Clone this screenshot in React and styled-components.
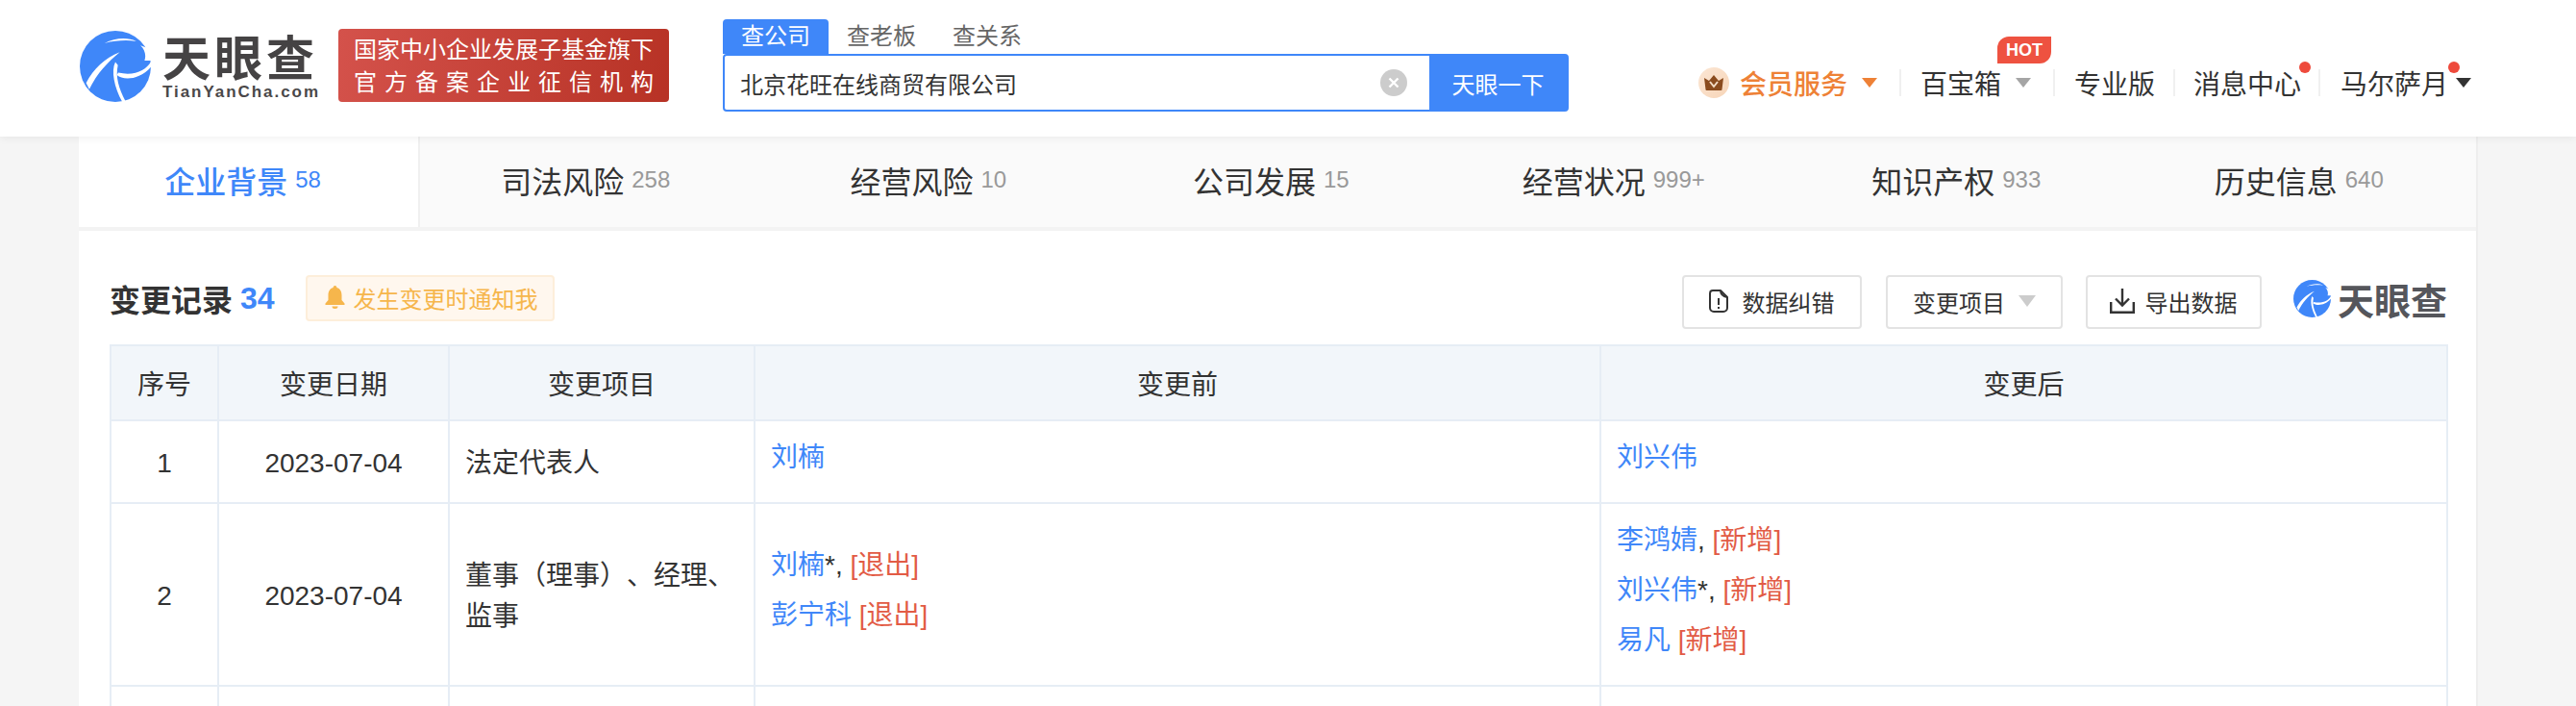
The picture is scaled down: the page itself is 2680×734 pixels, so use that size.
import React from 'react';
import styled, { createGlobalStyle } from 'styled-components';

const BLUE = '#3f87f9';
const LINE = '#e6edf5';

const GlobalStyle = createGlobalStyle`
    html, body {
        margin: 0;
        padding: 0;
        background: #f5f5f5;
    }
    body {
        font-family: "Liberation Sans", "Noto Sans CJK SC", sans-serif;
        color: #333;
        text-spacing-trim: space-all;
    }
    * {
        box-sizing: border-box;
    }
`;

const Page = styled.div`
    width: 2680px;
    height: 734px;
    overflow: hidden;
`;

const Header = styled.header`
    position: relative;
    z-index: 2;
    height: 142px;
    display: flex;
    align-items: flex-start;
    padding-left: 83px;
    padding-right: 109px;
    background: #fff;
    box-shadow: 0 2px 8px rgba(0, 0, 0, 0.06);
`;

const BrandBox = styled.div`
    display: flex;
    align-items: flex-start;
    margin-top: 32px;
    gap: 12px;
`;

const BrandText = styled.div`
    display: flex;
    flex-direction: column;
    width: 160px;
`;

const BrandName = styled.div`
    font-family: "Noto Sans CJK SC", sans-serif;
    font-weight: 700;
    font-size: 50px;
    line-height: 50px;
    letter-spacing: 4px;
    white-space: nowrap;
    color: #454344;
    height: 54px;
`;

const BrandDomain = styled.div`
    font-family: "Liberation Sans", sans-serif;
    font-size: 17px;
    line-height: 20px;
    letter-spacing: 1.95px;
    font-weight: 700;
    color: #4a4849;
    white-space: nowrap;
`;

const Badge = styled.div`
    width: 344px;
    height: 76px;
    margin-top: 30px;
    margin-left: 23px;
    padding: 5px 16px 0;
    border-radius: 4px;
    color: #fff;
    font-size: 24px;
    line-height: 34px;
    background: linear-gradient(100deg, #d4524b, #b73225);
`;

const BadgeLine = styled.div`
    text-align: justify;
    text-align-last: justify;
    white-space: nowrap;
`;

const Search = styled.div`
    width: 880px;
    margin-top: 20px;
    margin-left: 56px;
`;

const SearchTabs = styled.div`
    display: flex;
    height: 36px;
`;

const SearchTab = styled.div`
    width: 110px;
    text-align: center;
    font-size: 24px;
    line-height: 36px;
    border-radius: 4px 4px 0 0;
    color: ${(p) => (p.$active ? '#fff' : '#666')};
    background: ${(p) => (p.$active ? BLUE : 'transparent')};
`;

const SearchBar = styled.div`
    display: flex;
    height: 60px;
    border: 2px solid ${BLUE};
    border-radius: 4px;
`;

const SearchInput = styled.div`
    flex: 1;
    display: flex;
    align-items: center;
    justify-content: space-between;
    padding: 0 23px 0 16px;
    font-size: 24px;
    color: #333;
`;

const SearchButton = styled.div`
    width: 143px;
    display: flex;
    align-items: center;
    justify-content: center;
    font-size: 24px;
    color: #fff;
    background: ${BLUE};
`;

const Nav = styled.nav`
    margin-left: auto;
    height: 142px;
    display: flex;
    align-items: center;
    padding-top: 30px;
`;

const NavItem = styled.div`
    position: relative;
    display: flex;
    align-items: center;
    height: 32px;
    font-size: 28px;
    white-space: nowrap;
    color: ${(p) => p.$color || '#333'};
    font-weight: ${(p) => p.$weight || 400};
`;

const NavLine = styled.span`
    width: 2px;
    height: 28px;
    margin: 0 ${(p) => p.$right}px 0 ${(p) => p.$left}px;
    background: #f0f0f0;
`;

const Caret = styled.span`
    width: 0;
    height: 0;
    margin-left: ${(p) => p.$gap ?? 15}px;
    border-left: ${(p) => p.$size || 8}px solid transparent;
    border-right: ${(p) => p.$size || 8}px solid transparent;
    border-top: ${(p) => (p.$size || 8) * 1.35}px solid ${(p) => p.$color};
`;

const Hot = styled.span`
    position: absolute;
    left: 80px;
    top: -32px;
    width: 56px;
    height: 28px;
    display: flex;
    align-items: center;
    justify-content: center;
    font-size: 18px;
    font-weight: 700;
    color: #fff;
    background: #ee5240;
    border-radius: 12px 0 12px 0;
`;

const Dot = styled.span`
    position: absolute;
    right: ${(p) => p.$right}px;
    top: -6px;
    width: 12px;
    height: 12px;
    border-radius: 50%;
    background: #ee4a3c;
`;

const Content = styled.main`
    width: 2496px;
    margin-left: 82px;
    background: #fff;
    border-right: 2px solid #eee;
`;

const TabRow = styled.div`
    display: flex;
    height: 98px;
    border-bottom: 4px solid #f3f3f3;
`;

const Tab = styled.div`
    flex: ${(p) => (p.$active ? '0 0 355px' : '1')};
    display: flex;
    align-items: center;
    justify-content: center;
    gap: 8px;
    padding-right: 12px;
    padding-bottom: 4px;
    font-size: 32px;
    color: ${(p) => (p.$active ? BLUE : '#333')};
    font-weight: ${(p) => (p.$active ? 500 : 400)};
    background: ${(p) => (p.$active ? '#fff' : '#fafafa')};
    border-right: ${(p) => (p.$active ? '2px solid #f0f0f0' : 'none')};
`;

const TabCount = styled.span`
    font-size: 24px;
    font-weight: 400;
    color: ${(p) => (p.$active ? BLUE : '#999')};
`;

const Section = styled.section`
    padding: 46px 30px 0 32px;
`;

const TitleRow = styled.div`
    height: 72px;
    display: flex;
    align-items: flex-start;
`;

const Title = styled.h2`
    margin: 0;
    height: 48px;
    display: flex;
    align-items: center;
    gap: 8px;
    font-size: 32px;
    font-weight: 700;
    color: #333;
`;

const TitleCount = styled.span`
    color: ${BLUE};
`;

const Notify = styled.div`
    width: 259px;
    height: 48px;
    margin-left: 32px;
    padding: 0 0 2px 18px;
    display: flex;
    align-items: center;
    gap: 9px;
    font-size: 24px;
    color: #f6b64c;
    background: #fff7ee;
    border: 2px solid #fdeeda;
    border-radius: 4px;
`;

const Tools = styled.div`
    margin-left: auto;
    display: flex;
    align-items: flex-start;
`;

const ToolButton = styled.div`
    height: 56px;
    width: ${(p) => p.$width}px;
    margin-left: ${(p) => p.$gap}px;
    padding-bottom: 2px;
    display: flex;
    align-items: center;
    justify-content: center;
    gap: ${(p) => p.$inner}px;
    font-size: 24px;
    color: #333;
    background: #fff;
    border: 2px solid #e3e3e3;
    border-radius: 4px;
`;

const ToolLogo = styled.div`
    display: flex;
    align-items: center;
    gap: 7px;
    margin-left: 33px;
    margin-top: 5px;
`;

const ToolLogoName = styled.div`
    font-family: "Noto Sans CJK SC", sans-serif;
    font-weight: 700;
    font-size: 38px;
    line-height: 39px;
    white-space: nowrap;
    color: #55565b;
`;

const Table = styled.table`
    width: 2431px;
    table-layout: fixed;
    border-collapse: collapse;
    font-size: 28px;
    color: #333;
`;

const Th = styled.th`
    height: 78px;
    padding: 0;
    font-weight: 400;
    text-align: center;
    background: #f2f6fa;
    border: 2px solid ${LINE};
`;

const Td = styled.td`
    padding: 18px 16px 14px;
    text-align: ${(p) => (p.$center ? 'center' : 'left')};
    line-height: 42px;
    vertical-align: middle;
    border: 2px solid ${LINE};
`;

const BlankRow = styled.tr`
    height: 100px;
`;

const Entry = styled.div`
    height: 40px;
    line-height: 40px;
    margin-bottom: 12px;
    white-space: nowrap;
`;

const PersonLink = styled.a`
    color: ${BLUE};
    text-decoration: none;
`;

const Tag = styled.span`
    color: #e25b45;
`;

const Emphasis = styled.span`
    color: #333;
`;

function LogoMark({ size }) {
    return (
        <svg width={size} height={size} viewBox="14 14 224 224" style={{ flexShrink: 0 }}>
            <circle cx="126" cy="126" r="112" fill="#3f87f9" />
            <path d="M92 53C125 36 165 34 192 47C160 42 125 45 92 53Z" fill="#fff" />
            <path d="M34 178C58 132 92 100 140 81C102 112 68 148 44 198Z" fill="#fff" />
            <path d="M126 112C112 140 122 190 148 238L158 236C136 192 126 160 134 122Z" fill="#fff" />
            <path d="M240 108C226 136 190 158 135 146L131 153C150 170 200 170 238 128Z" fill="#fff" />
            <path d="M205 60C218 72 224 90 218 108L240 108L232 70Z" fill="#fff" />
        </svg>
    );
}

function CrownIcon() {
    return (
        <svg width="32" height="32" viewBox="0 0 32 32" style={{ marginRight: 11 }}>
            <defs>
                <linearGradient id="crownBg" x1="0" y1="0" x2="1" y2="1">
                    <stop offset="0" stopColor="#fbe6d4" />
                    <stop offset="1" stopColor="#f7d5b8" />
                </linearGradient>
            </defs>
            <circle cx="16" cy="16" r="16" fill="url(#crownBg)" />
            <path d="M6 11l5 3 5-6 5 6 5-3-1.5 12a1 1 0 0 1-1 1h-15a1 1 0 0 1-1-1Z" fill="#8a4b1e" />
            <path d="M12 15l4 5 4-5" fill="none" stroke="#f3dcc6" strokeWidth="2" />
        </svg>
    );
}

function ClearIcon() {
    return (
        <svg width="28" height="28" viewBox="0 0 28 28">
            <circle cx="14" cy="14" r="14" fill="#ccc" />
            <path d="M9.5 9.5l9 9M18.5 9.5l-9 9" stroke="#fff" strokeWidth="2.4" />
        </svg>
    );
}

function BellIcon() {
    return (
        <svg width="21" height="24" viewBox="0 0 21 24">
            <path d="M10.5 0a1.8 1.8 0 0 1 1.8 2C16 3 17.5 6 17.5 10v5l3 3.5v1.5H.5v-1.5l3-3.5v-5c0-4 1.5-7 5.2-8a1.8 1.8 0 0 1 1.8-2Z" fill="#f6b64c" />
            <path d="M7.5 21.5h6a3 2.5 0 0 1-6 0Z" fill="#f6b64c" />
        </svg>
    );
}

function FileIcon() {
    return (
        <svg width="20" height="24" viewBox="0 0 20 24" fill="none" stroke="#333" strokeWidth="2">
            <path d="M4 1h8l7 7v11a4 4 0 0 1-4 4H5a4 4 0 0 1-4-4V4a3 3 0 0 1 3-3Z" strokeLinejoin="round" />
            <path d="M12 1c0 4 2 6 7 7" />
            <path d="M10 9v7M10 18v2" />
        </svg>
    );
}

function DownloadIcon() {
    return (
        <svg width="26" height="26" viewBox="0 0 26 26" fill="none" stroke="#333" strokeWidth="2.4">
            <path d="M13 0v17M6 10.5l7 7 7-7" />
            <path d="M1.2 14v10.8h23.6V14" />
        </svg>
    );
}

const tabs = [
    { name: '企业背景', count: '58', active: true },
    { name: '司法风险', count: '258' },
    { name: '经营风险', count: '10' },
    { name: '公司发展', count: '15' },
    { name: '经营状况', count: '999+' },
    { name: '知识产权', count: '933' },
    { name: '历史信息', count: '640' },
];

function Person({ name, mark, tag }) {
    return (
        <Entry>
            <PersonLink>{name}</PersonLink>
            {mark && <Emphasis>{mark}</Emphasis>} {tag && <Tag>[{tag}]</Tag>}
        </Entry>
    );
}

export default function App() {
    return (
        <Page>
            <GlobalStyle />
            <Header>
                <BrandBox>
                    <LogoMark size={74} />
                    <BrandText>
                        <BrandName>天眼查</BrandName>
                        <BrandDomain>TianYanCha.com</BrandDomain>
                    </BrandText>
                </BrandBox>
                <Badge>
                    <BadgeLine>国家中小企业发展子基金旗下</BadgeLine>
                    <BadgeLine>官方备案企业征信机构</BadgeLine>
                </Badge>
                <Search>
                    <SearchTabs>
                        <SearchTab $active>查公司</SearchTab>
                        <SearchTab>查老板</SearchTab>
                        <SearchTab>查关系</SearchTab>
                    </SearchTabs>
                    <SearchBar>
                        <SearchInput>
                            北京花旺在线商贸有限公司
                            <ClearIcon />
                        </SearchInput>
                        <SearchButton>天眼一下</SearchButton>
                    </SearchBar>
                </Search>
                <Nav>
                    <NavItem $color="#ee8136" $weight={500}>
                        <CrownIcon />
                        会员服务
                        <Caret $color="#ee8136" />
                    </NavItem>
                    <NavLine $left={23} $right={20} />
                    <NavItem>
                        百宝箱
                        <Caret $color="#a5a5a5" />
                        <Hot>HOT</Hot>
                    </NavItem>
                    <NavLine $left={23} $right={20} />
                    <NavItem>专业版</NavItem>
                    <NavLine $left={19} $right={19} />
                    <NavItem>
                        消息中心
                        <Dot $right={-10} />
                    </NavItem>
                    <NavLine $left={18} $right={21} />
                    <NavItem>
                        马尔萨月
                        <Caret $color="#333" $gap={8} />
                        <Dot $right={12} />
                    </NavItem>
                </Nav>
            </Header>
            <Content>
                <TabRow>
                    {tabs.map((tab) => (
                        <Tab key={tab.name} $active={tab.active}>
                            {tab.name}
                            <TabCount $active={tab.active}>{tab.count}</TabCount>
                        </Tab>
                    ))}
                </TabRow>
                <Section>
                    <TitleRow>
                        <Title>
                            变更记录 <TitleCount>34</TitleCount>
                        </Title>
                        <Notify>
                            <BellIcon />
                            发生变更时通知我
                        </Notify>
                        <Tools>
                            <ToolButton $width={187} $gap={0} $inner={14}>
                                <FileIcon />
                                数据纠错
                            </ToolButton>
                            <ToolButton $width={184} $gap={25} $inner={14}>
                                变更项目
                                <Caret $color="#ccc" $gap={0} $size={9} />
                            </ToolButton>
                            <ToolButton $width={183} $gap={24} $inner={10}>
                                <DownloadIcon />
                                导出数据
                            </ToolButton>
                            <ToolLogo>
                                <LogoMark size={39} />
                                <ToolLogoName>天眼查</ToolLogoName>
                            </ToolLogo>
                        </Tools>
                    </TitleRow>
                    <Table>
                        <colgroup>
                            <col style={{ width: 112 }} />
                            <col style={{ width: 240 }} />
                            <col style={{ width: 318 }} />
                            <col style={{ width: 880 }} />
                            <col style={{ width: 881 }} />
                        </colgroup>
                        <thead>
                            <tr>
                                <Th>序号</Th>
                                <Th>变更日期</Th>
                                <Th>变更项目</Th>
                                <Th>变更前</Th>
                                <Th>变更后</Th>
                            </tr>
                        </thead>
                        <tbody>
                            <tr>
                                <Td $center>1</Td>
                                <Td $center>2023-07-04</Td>
                                <Td>法定代表人</Td>
                                <Td>
                                    <Person name="刘楠" />
                                </Td>
                                <Td>
                                    <Person name="刘兴伟" />
                                </Td>
                            </tr>
                            <tr>
                                <Td $center>2</Td>
                                <Td $center>2023-07-04</Td>
                                <Td>董事（理事）、经理、监事</Td>
                                <Td>
                                    <Person name="刘楠" mark="*," tag="退出" />
                                    <Person name="彭宁科" tag="退出" />
                                </Td>
                                <Td>
                                    <Person name="李鸿婧" mark="," tag="新增" />
                                    <Person name="刘兴伟" mark="*," tag="新增" />
                                    <Person name="易凡" tag="新增" />
                                </Td>
                            </tr>
                            <BlankRow>
                                <Td />
                                <Td />
                                <Td />
                                <Td />
                                <Td />
                            </BlankRow>
                        </tbody>
                    </Table>
                </Section>
            </Content>
        </Page>
    );
}
